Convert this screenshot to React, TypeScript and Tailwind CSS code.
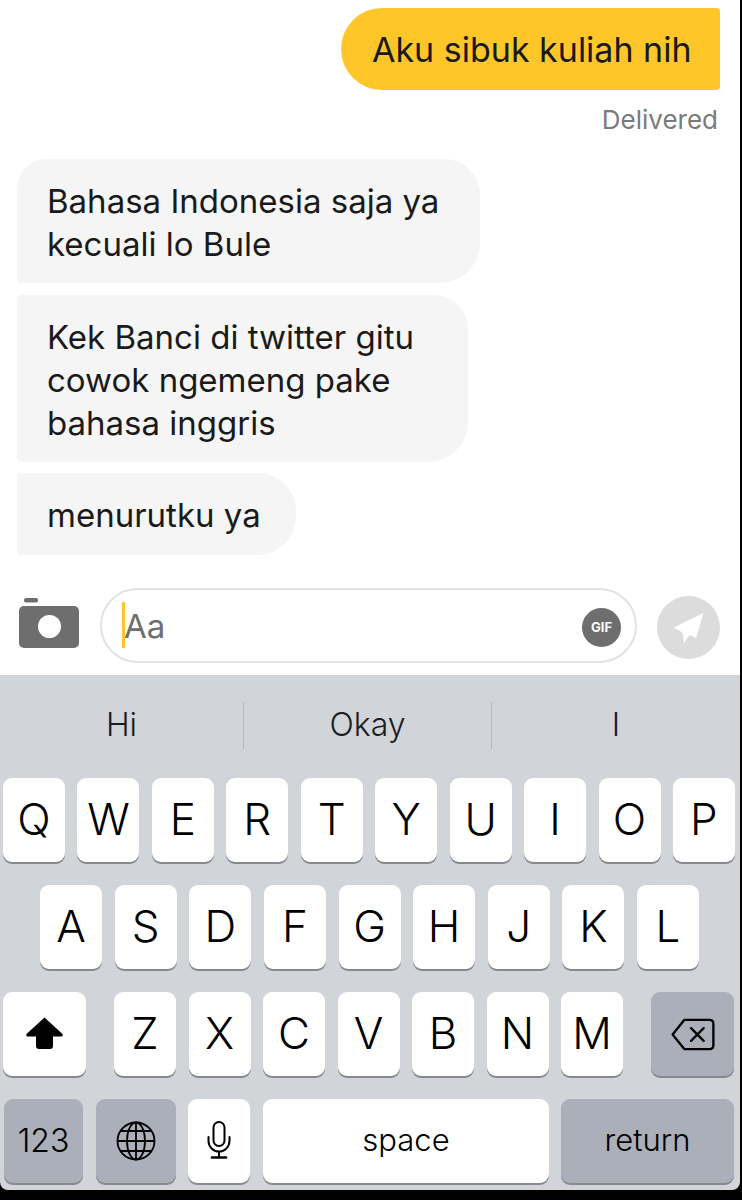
import type { ReactNode } from "react";

const chatFont = "font-['Inter',sans-serif]";
const keyFont = "font-['Inter',sans-serif]";

function Key({ label, className = "w-[62px]", children }: { label?: string; className?: string; children?: ReactNode }) {
  return (
    <div
      className={`flex h-[84px] items-center justify-center rounded-[9px] bg-white pb-[2px] text-[44px] font-light text-black shadow-[0_2px_0_#87898d] ${className}`}
    >
      {label}
      {children}
    </div>
  );
}

function DarkKey({ children, className }: { children: ReactNode; className: string }) {
  return (
    <div
      className={`flex h-[84px] items-center justify-center rounded-[9px] bg-[#abafb9] text-black shadow-[0_2px_0_#87898d] ${className}`}
    >
      {children}
    </div>
  );
}

function CameraIcon() {
  return (
    <svg width="60" height="52" viewBox="0 0 60 52">
      <rect x="5" y="1" width="14" height="4.5" rx="2" fill="#6e6e6e" />
      <rect x="0" y="9" width="60" height="42" rx="5" fill="#6e6e6e" />
      <circle cx="30.5" cy="29.5" r="11.5" fill="#fff" />
    </svg>
  );
}

function SendIcon() {
  return (
    <svg width="31" height="30" viewBox="0 0 30 30">
      <path d="M30 0 L0 14.5 L9 19.5 L10.5 30 L16 22 L22.5 25 Z" fill="#fff" />
    </svg>
  );
}

function ShiftIcon() {
  return (
    <svg width="37" height="32" viewBox="0 0 37 32">
      <path
        d="M18.5 0.5 L36.5 17 Q37.5 19.5 35 19.5 L27 19.5 L27 29 Q27 32 24 32 L13 32 Q10 32 10 29 L10 19.5 L2 19.5 Q-0.5 19.5 0.5 17 Z"
        fill="#000"
      />
    </svg>
  );
}

function DeleteIcon() {
  return (
    <svg width="46" height="33" viewBox="0 0 46 34" fill="none" stroke="#000" strokeWidth="2.4" strokeLinejoin="round">
      <path d="M14 2 H40 Q44 2 44 6 V28 Q44 32 40 32 H14 L2 17 Z" />
      <path d="M21 10.5 L34 23.5 M34 10.5 L21 23.5" strokeLinecap="round" />
    </svg>
  );
}

function GlobeIcon() {
  return (
    <svg width="40" height="40" viewBox="0 0 40 40" fill="none" stroke="#000" strokeWidth="1.8">
      <circle cx="20" cy="20" r="18.5" />
      <ellipse cx="20" cy="20" rx="9" ry="18.5" />
      <path d="M20 1.5 V38.5 M1.5 20 H38.5 M4.5 10 H35.5 M4.5 30 H35.5" />
    </svg>
  );
}

function MicIcon() {
  return (
    <svg width="24" height="38" viewBox="0 0 24 38" fill="none" stroke="#000" strokeWidth="2" strokeLinecap="round">
      <rect x="6.5" y="1" width="11" height="24" rx="5.5" />
      <path d="M1.5 16 V20 A10.5 10.5 0 0 0 22.5 20 V16 M12 30.5 V36" />
      <path d="M5 36.5 H19" strokeWidth="2.6" />
    </svg>
  );
}

export default function App() {
  return (
    <div className={`flex h-[1200px] w-[742px] flex-col overflow-hidden bg-black pr-[2px] pb-[10px] ${chatFont}`}>
      <div className="flex h-[675px] shrink-0 flex-col bg-white pt-2">
        <div className="flex flex-col items-end pr-[20px]">
          <div className="flex h-[82px] w-[379px] items-center rounded-l-[41px] rounded-r-[4px] bg-[#ffc629] pl-[31px] text-[34px] text-[#1a1a1a]">
            Aku sibuk kuliah nih
          </div>
          <div className="mt-[15px] pr-[2px] text-[26px] leading-[30px] text-[#7a7a7a]">Delivered</div>
        </div>

        <div className="mt-[24px] flex flex-col items-start pl-[17px] text-[33px] leading-[43px] text-[#1a1a1a]">
          <div className="h-[124px] w-[463px] rounded-tl-[30px] rounded-tr-[36px] rounded-br-[40px] rounded-bl-[4px] bg-[#f5f5f5] pt-[21px] pl-[30px]">
            Bahasa Indonesia saja ya
            <br />
            kecuali lo Bule
          </div>
          <div className="mt-[12px] h-[167px] w-[451px] rounded-tl-[4px] rounded-tr-[34px] rounded-br-[40px] rounded-bl-[4px] bg-[#f5f5f5] pt-[21px] pl-[30px]">
            Kek Banci di twitter gitu
            <br />
            cowok ngemeng pake
            <br />
            bahasa inggris
          </div>
          <div className="mt-[11px] h-[82px] w-[279px] rounded-tl-[4px] rounded-tr-[38px] rounded-br-[38px] rounded-bl-[4px] bg-[#f5f5f5] pt-[21px] pl-[30px]">
            menurutku ya
          </div>
        </div>

        <div className="mt-[33px] flex items-start pl-[19px]">
          <div className="mt-[9px]">
            <CameraIcon />
          </div>
          <div className="relative ml-[21px] flex h-[75px] w-[537px] items-center rounded-full border-2 border-[#e2e2e2] pt-[2px] pl-[22px] text-[33px] text-[#6e6e6e]">
            <span className="absolute top-[12px] left-[20px] h-[46px] w-[3px] bg-[#ffc629]" />
            Aa
            <span className={`absolute top-[18px] right-[14px] flex h-[39px] w-[39px] items-center justify-center rounded-full bg-[#6e6e6e] text-[13px] font-bold text-white ${keyFont}`}>
              GIF
            </span>
          </div>
          <div className="mt-[8px] ml-[20px] flex h-[63px] w-[63px] items-center justify-center rounded-full bg-[#dcdcdc]">
            <SendIcon />
          </div>
        </div>
      </div>

      <div className={`flex flex-1 flex-col rounded-br-[8px] rounded-bl-[8px] bg-[#d1d4d9] ${keyFont}`}>
        <div className="flex h-[103px] items-center pb-[3px] text-[32px] font-light text-[#1c1c1e]">
          <div className="flex h-[47px] w-[244px] items-center justify-center border-r border-[#b4b8be]">Hi</div>
          <div className="flex h-[47px] w-[248px] items-center justify-center border-r border-[#b4b8be]">Okay</div>
          <div className="flex h-[47px] flex-1 items-center justify-center">I</div>
        </div>

        <div className="flex flex-col gap-[23px]">
          <div className="flex justify-between pr-[5px] pl-[3px]">
            {["Q", "W", "E", "R", "T", "Y", "U", "I", "O", "P"].map((k) => (
              <Key key={k} label={k} />
            ))}
          </div>
          <div className="flex justify-between pr-[41px] pl-[40px]">
            {["A", "S", "D", "F", "G", "H", "J", "K", "L"].map((k) => (
              <Key key={k} label={k} />
            ))}
          </div>
          <div className="flex pl-[3px]">
            <Key className="w-[83px]">
              <ShiftIcon />
            </Key>
            <div className="ml-[28px] flex w-[509px] justify-between">
              {["Z", "X", "C", "V", "B", "N", "M"].map((k) => (
                <Key key={k} label={k} />
              ))}
            </div>
            <DarkKey className="ml-[28px] w-[83px]">
              <DeleteIcon />
            </DarkKey>
          </div>
          <div className="flex pl-[4px]">
            <DarkKey className="w-[79px] text-[32px] font-light">123</DarkKey>
            <DarkKey className="ml-[13px] w-[80px]">
              <GlobeIcon />
            </DarkKey>
            <Key className="ml-[12px] w-[62px]">
              <MicIcon />
            </Key>
            <div className="ml-[13px] flex h-[84px] w-[286px] items-center justify-center rounded-[9px] bg-white pb-[2px] text-[31px] font-light text-black shadow-[0_2px_0_#87898d]">
              space
            </div>
            <DarkKey className="ml-[12px] w-[173px] pb-[2px] text-[31px] font-light">return</DarkKey>
          </div>
        </div>
      </div>
    </div>
  );
}
